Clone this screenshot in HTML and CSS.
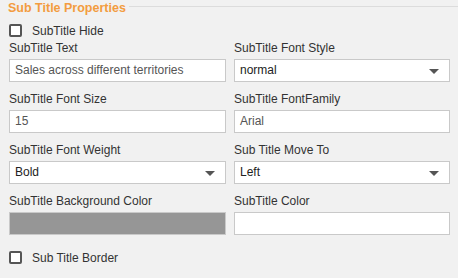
FILE: index.html
```html
<!DOCTYPE html>
<html lang="en">
<head>
    <meta charset="UTF-8">
    <title>Sub Title Properties</title>
    <link rel="stylesheet" href="styles.css">
</head>
<body>
    <div class="panel">
        <div class="legend-row">
            <span class="legend">Sub Title Properties</span>
            <span class="legend-line"></span>
        </div>

        <label class="check-row">
            <span class="check-box"></span>
            <span>SubTitle Hide</span>
        </label>

        <div class="field-grid">
            <div class="field">
                <div class="field-label">SubTitle Text</div>
                <div class="text-box">Sales across different territories</div>
            </div>
            <div class="field">
                <div class="field-label">SubTitle Font Style</div>
                <div class="select-box">normal<span class="arrow"></span></div>
            </div>

            <div class="field">
                <div class="field-label">SubTitle Font Size</div>
                <div class="text-box">15</div>
            </div>
            <div class="field">
                <div class="field-label">SubTitle FontFamily</div>
                <div class="text-box">Arial</div>
            </div>

            <div class="field">
                <div class="field-label">SubTitle Font Weight</div>
                <div class="select-box">Bold<span class="arrow"></span></div>
            </div>
            <div class="field">
                <div class="field-label">Sub Title Move To</div>
                <div class="select-box">Left<span class="arrow"></span></div>
            </div>

            <div class="field">
                <div class="field-label">SubTitle Background Color</div>
                <div class="color-box" style="background-color: #969696;"></div>
            </div>
            <div class="field">
                <div class="field-label">SubTitle Color</div>
                <div class="color-box" style="background-color: #ffffff;"></div>
            </div>
        </div>

        <label class="check-row border-row">
            <span class="check-box"></span>
            <span>Sub Title Border</span>
        </label>
    </div>
</body>
</html>
```

FILE: styles.css
```css
body {
    margin: 0;
    background-color: #f1f1f1;
    font-family: "Liberation Sans", Arial, sans-serif;
    font-size: 12px;
    color: #333;
}

.panel {
    padding: 0 8px 0 9px;
}

.legend-row {
    display: flex;
    align-items: flex-start;
    height: 15px;
    margin-left: -1px;
    margin-right: -8px;
}

.legend {
    padding-top: 1px;
    font-weight: bold;
    font-size: 12.5px;
    line-height: 14px;
    color: #f39c40;
}

.legend-line {
    flex: 1;
    height: 1px;
    margin-top: 6px;
    margin-left: 3px;
    background-color: #dcdcdc;
}

.check-row {
    display: flex;
    align-items: center;
    gap: 10px;
    height: 13px;
    margin-top: 9px;
    font-size: 12px;
    color: #333;
}

.check-box {
    box-sizing: border-box;
    width: 13px;
    height: 13px;
    border: 2px solid #555;
    border-radius: 2px;
    background: #fff;
}

.border-row {
    margin-top: 16px;
}

.field-grid {
    display: grid;
    grid-template-columns: 217px 216px;
    column-gap: 8px;
    row-gap: 10px;
    margin-top: 4px;
}

.field-label {
    line-height: 14px;
    margin-bottom: 4px;
    color: #333;
}

.text-box,
.select-box,
.color-box {
    box-sizing: border-box;
    height: 23px;
    border: 1px solid #c9c9c9;
    background: #fff;
    line-height: 21px;
}

.text-box {
    padding-left: 5px;
    color: #555;
}

.select-box {
    position: relative;
    padding-left: 5px;
    color: #222;
}

.arrow {
    position: absolute;
    right: 10px;
    top: 9px;
    width: 0;
    height: 0;
    border-left: 5px solid transparent;
    border-right: 5px solid transparent;
    border-top: 5px solid #555;
}
```
